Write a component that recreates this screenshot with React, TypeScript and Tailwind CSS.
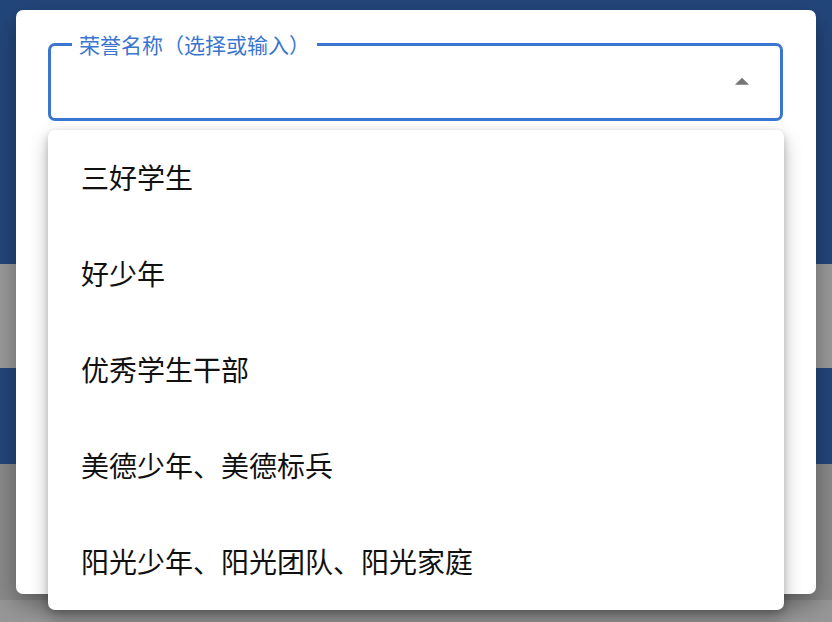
import React from "react";

const honors = [
  "三好学生",
  "好少年",
  "优秀学生干部",
  "美德少年、美德标兵",
  "阳光少年、阳光团队、阳光家庭",
];

const font = { fontFamily: '"Noto Sans CJK SC", "Noto Sans", sans-serif' };

const App: React.FC = () => {
  return (
    <div
      className="relative flex h-[622px] w-[832px] flex-col overflow-hidden"
      style={font}
    >
      {/* dimmed page behind the dialog */}
      <div className="h-[264px] bg-[#23467a]" />
      <div className="h-[104px] bg-[#9a9a9a]" />
      <div className="h-[96px] bg-[#23467a]" />
      <div className="h-[136px] bg-[#8a8a8a]" />
      <div className="flex-1 bg-[#979797]" />

      {/* dialog */}
      <div className="absolute left-[16px] top-[10px] h-[584px] w-[800px] rounded-[7px] bg-white px-[32px] pt-[33px] shadow-[0_10px_24px_rgba(0,0,0,0.35)]">
        <div className="relative flex h-[78px] w-[735px] items-center justify-end rounded-[7px] border-[3px] border-[#3a76cf] pr-[21px]">
          <span className="absolute left-[21px] top-[-17px] bg-white px-[7px] text-[21px] leading-[30px] text-[#3a76cf]">
            荣誉名称（选择或输入）
          </span>
          <svg width="34" height="34" viewBox="0 0 24 24">
            <path d="M7 14l5-5 5 5z" fill="#757575" />
          </svg>
        </div>
      </div>

      {/* dropdown menu */}
      <ul className="absolute left-[48px] top-[130px] w-[736px] overflow-hidden rounded-[7px] bg-white shadow-[0_8px_18px_rgba(0,0,0,0.3),0_2px_6px_rgba(0,0,0,0.15)]">
        {honors.map((h) => (
          <li
            key={h}
            className="flex h-[96px] items-center pb-[3px] pl-[33px] text-[28px] text-[#111]"
          >
            {h}
          </li>
        ))}
      </ul>
    </div>
  );
};

export default App;
